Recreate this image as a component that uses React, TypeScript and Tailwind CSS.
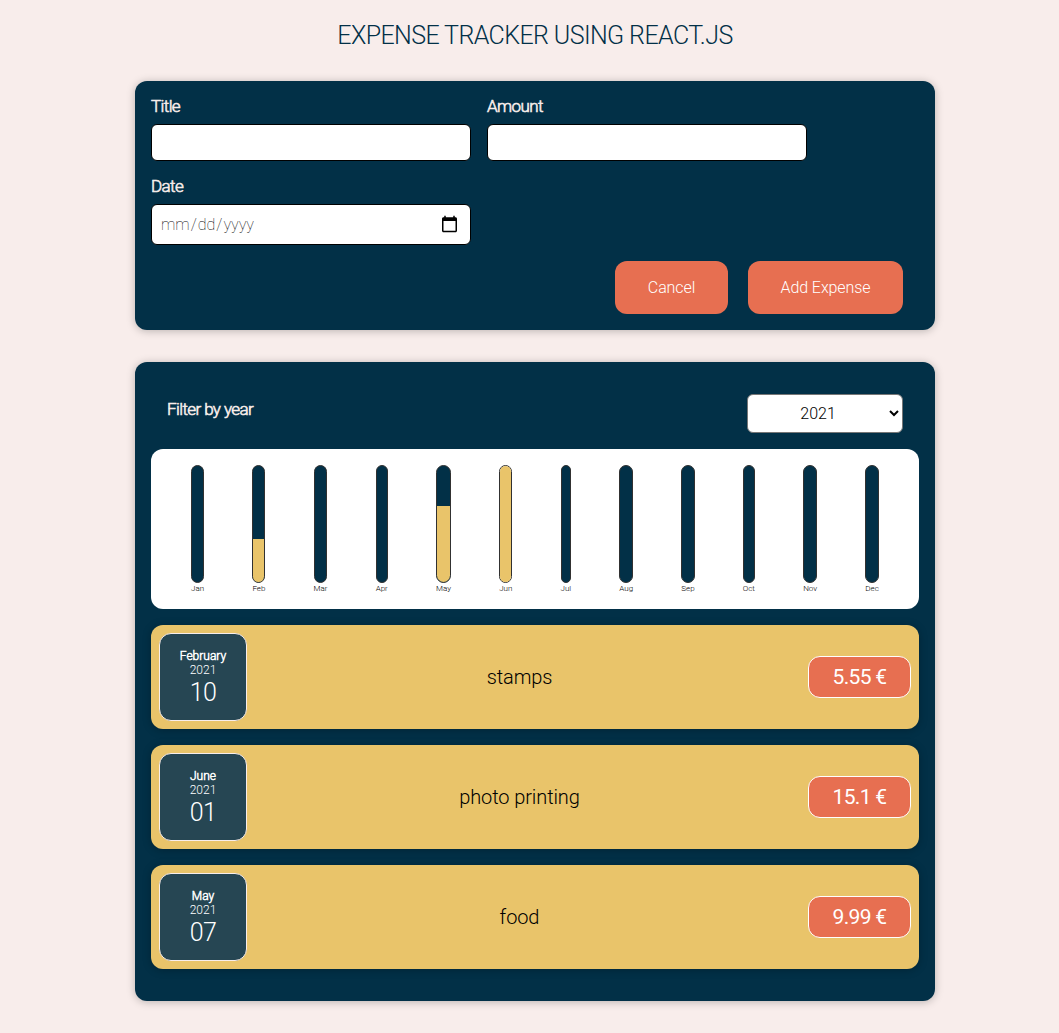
const months = [
  { label: 'Jan', fill: 0 },
  { label: 'Feb', fill: 37 },
  { label: 'Mar', fill: 0 },
  { label: 'Apr', fill: 0 },
  { label: 'May', fill: 65.5 },
  { label: 'Jun', fill: 100 },
  { label: 'Jul', fill: 0 },
  { label: 'Aug', fill: 0 },
  { label: 'Sep', fill: 0 },
  { label: 'Oct', fill: 0 },
  { label: 'Nov', fill: 0 },
  { label: 'Dec', fill: 0 },
];

const expenses = [
  { month: 'February', year: '2021', day: '10', title: 'stamps', amount: '5.55 €' },
  { month: 'June', year: '2021', day: '01', title: 'photo printing', amount: '15.1 €' },
  { month: 'May', year: '2021', day: '07', title: 'food', amount: '9.99 €' },
];

const card = 'rounded-xl bg-[#023047] shadow-[0_1px_8px_rgba(0,0,0,0.25)]';
const label = 'text-[17px] leading-[19px] font-light tracking-[-0.6px] text-[#f8edeb] [-webkit-text-stroke:0.6px_#f8edeb]';
const input = 'w-80 rounded-md border border-black bg-white px-2 text-base font-thin text-black';

function ExpenseForm() {
  return (
    <form className={`h-[249px] w-[800px] p-4 ${card}`}>
      <div className="flex flex-wrap gap-4">
        <label className="flex flex-col gap-2">
          <span className={label}>Title</span>
          <input type="text" className={`h-[37px] ${input}`} />
        </label>
        <label className="flex flex-col gap-2">
          <span className={label}>Amount</span>
          <input type="number" className={`h-[37px] ${input}`} />
        </label>
        <label className="flex flex-col gap-2">
          <span className={label}>Date</span>
          <input
            type="date"
            className={`h-[41px] ${input} [&::-webkit-calendar-picker-indicator]:mr-[3px] [&::-webkit-calendar-picker-indicator]:size-[19px] [&::-webkit-calendar-picker-indicator]:p-0`}
          />
        </label>
      </div>
      <div className="mt-4 mr-4 flex justify-end gap-5">
        <button type="button" className="h-[53px] w-[113px] rounded-xl bg-[#e76f51] text-base font-light tracking-[-0.1px] text-white">
          Cancel
        </button>
        <button type="button" className="h-[53px] w-[155px] rounded-xl bg-[#e76f51] text-base font-light tracking-[-0.1px] text-white">
          Add Expense
        </button>
      </div>
    </form>
  );
}

function Chart() {
  return (
    <div className="flex h-40 justify-around rounded-xl bg-white p-4 text-center">
      {months.map((m) => (
        <div key={m.label} className="flex h-32 flex-col items-center">
          <div className="flex h-[118px] w-full shrink-0 flex-col justify-end overflow-hidden rounded-xl border border-[#313131] bg-[#023047]">
            <div className="bg-[#e9c46a]" style={{ height: `${m.fill}%` }} />
          </div>
          <div className="pt-px text-[8px] leading-[10px] font-light text-black">{m.label}</div>
        </div>
      ))}
    </div>
  );
}

function ExpenseItem({ item }: { item: (typeof expenses)[number] }) {
  return (
    <li className="flex h-[104px] items-center rounded-xl bg-[#e9c46a] p-2 shadow-[0_1px_8px_rgba(0,0,0,0.25)]">
      <div className="flex size-[88px] flex-col items-center justify-center rounded-xl border border-[#f8edeb] bg-[#264653] pt-1 text-white">
        <div className="text-xs leading-[14px] font-light [-webkit-text-stroke:0.5px_white]">{item.month}</div>
        <div className="text-xs leading-[14px] font-light">{item.year}</div>
        <div className="text-[25px] leading-8 font-light tracking-[-0.6px]">{item.day}</div>
      </div>
      <h2 className="flex-1 pr-4 text-center text-xl font-light tracking-[-0.1px] text-black">{item.title}</h2>
      <div className="flex h-[42px] w-[103px] items-center justify-center rounded-xl border border-white bg-[#e76f51] pt-0.5 text-[21px] tracking-[-0.7px] text-white">
        {item.amount}
      </div>
    </li>
  );
}

export default function App() {
  return (
    <div className="flex min-h-[1033px] flex-col items-center bg-[#f8edeb] pl-[11px] font-['Roboto',sans-serif]">
      <h1 className="mt-[22px] text-[25px] leading-7 font-light tracking-[-0.6px] text-[#023047]">EXPENSE TRACKER USING REACT.JS</h1>
      <main className="mt-[31px] flex flex-col gap-8">
        <ExpenseForm />
        <section className={`h-[639px] w-[800px] p-4 ${card}`}>
          <div className="flex h-[71px] items-start justify-between px-4 pt-4">
            <label htmlFor="year" className={`mt-1.5 ${label}`}>Filter by year</label>
            <select id="year" defaultValue="2021" className="h-[39px] w-[156px] rounded-md border border-[#767676] bg-white pr-0.5 text-center text-base font-light text-black">
              <option>2022</option>
              <option>2021</option>
              <option>2020</option>
            </select>
          </div>
          <Chart />
          <ul className="mt-4 flex flex-col gap-4">
            {expenses.map((e) => <ExpenseItem key={e.title} item={e} />)}
          </ul>
        </section>
      </main>
    </div>
  );
}
